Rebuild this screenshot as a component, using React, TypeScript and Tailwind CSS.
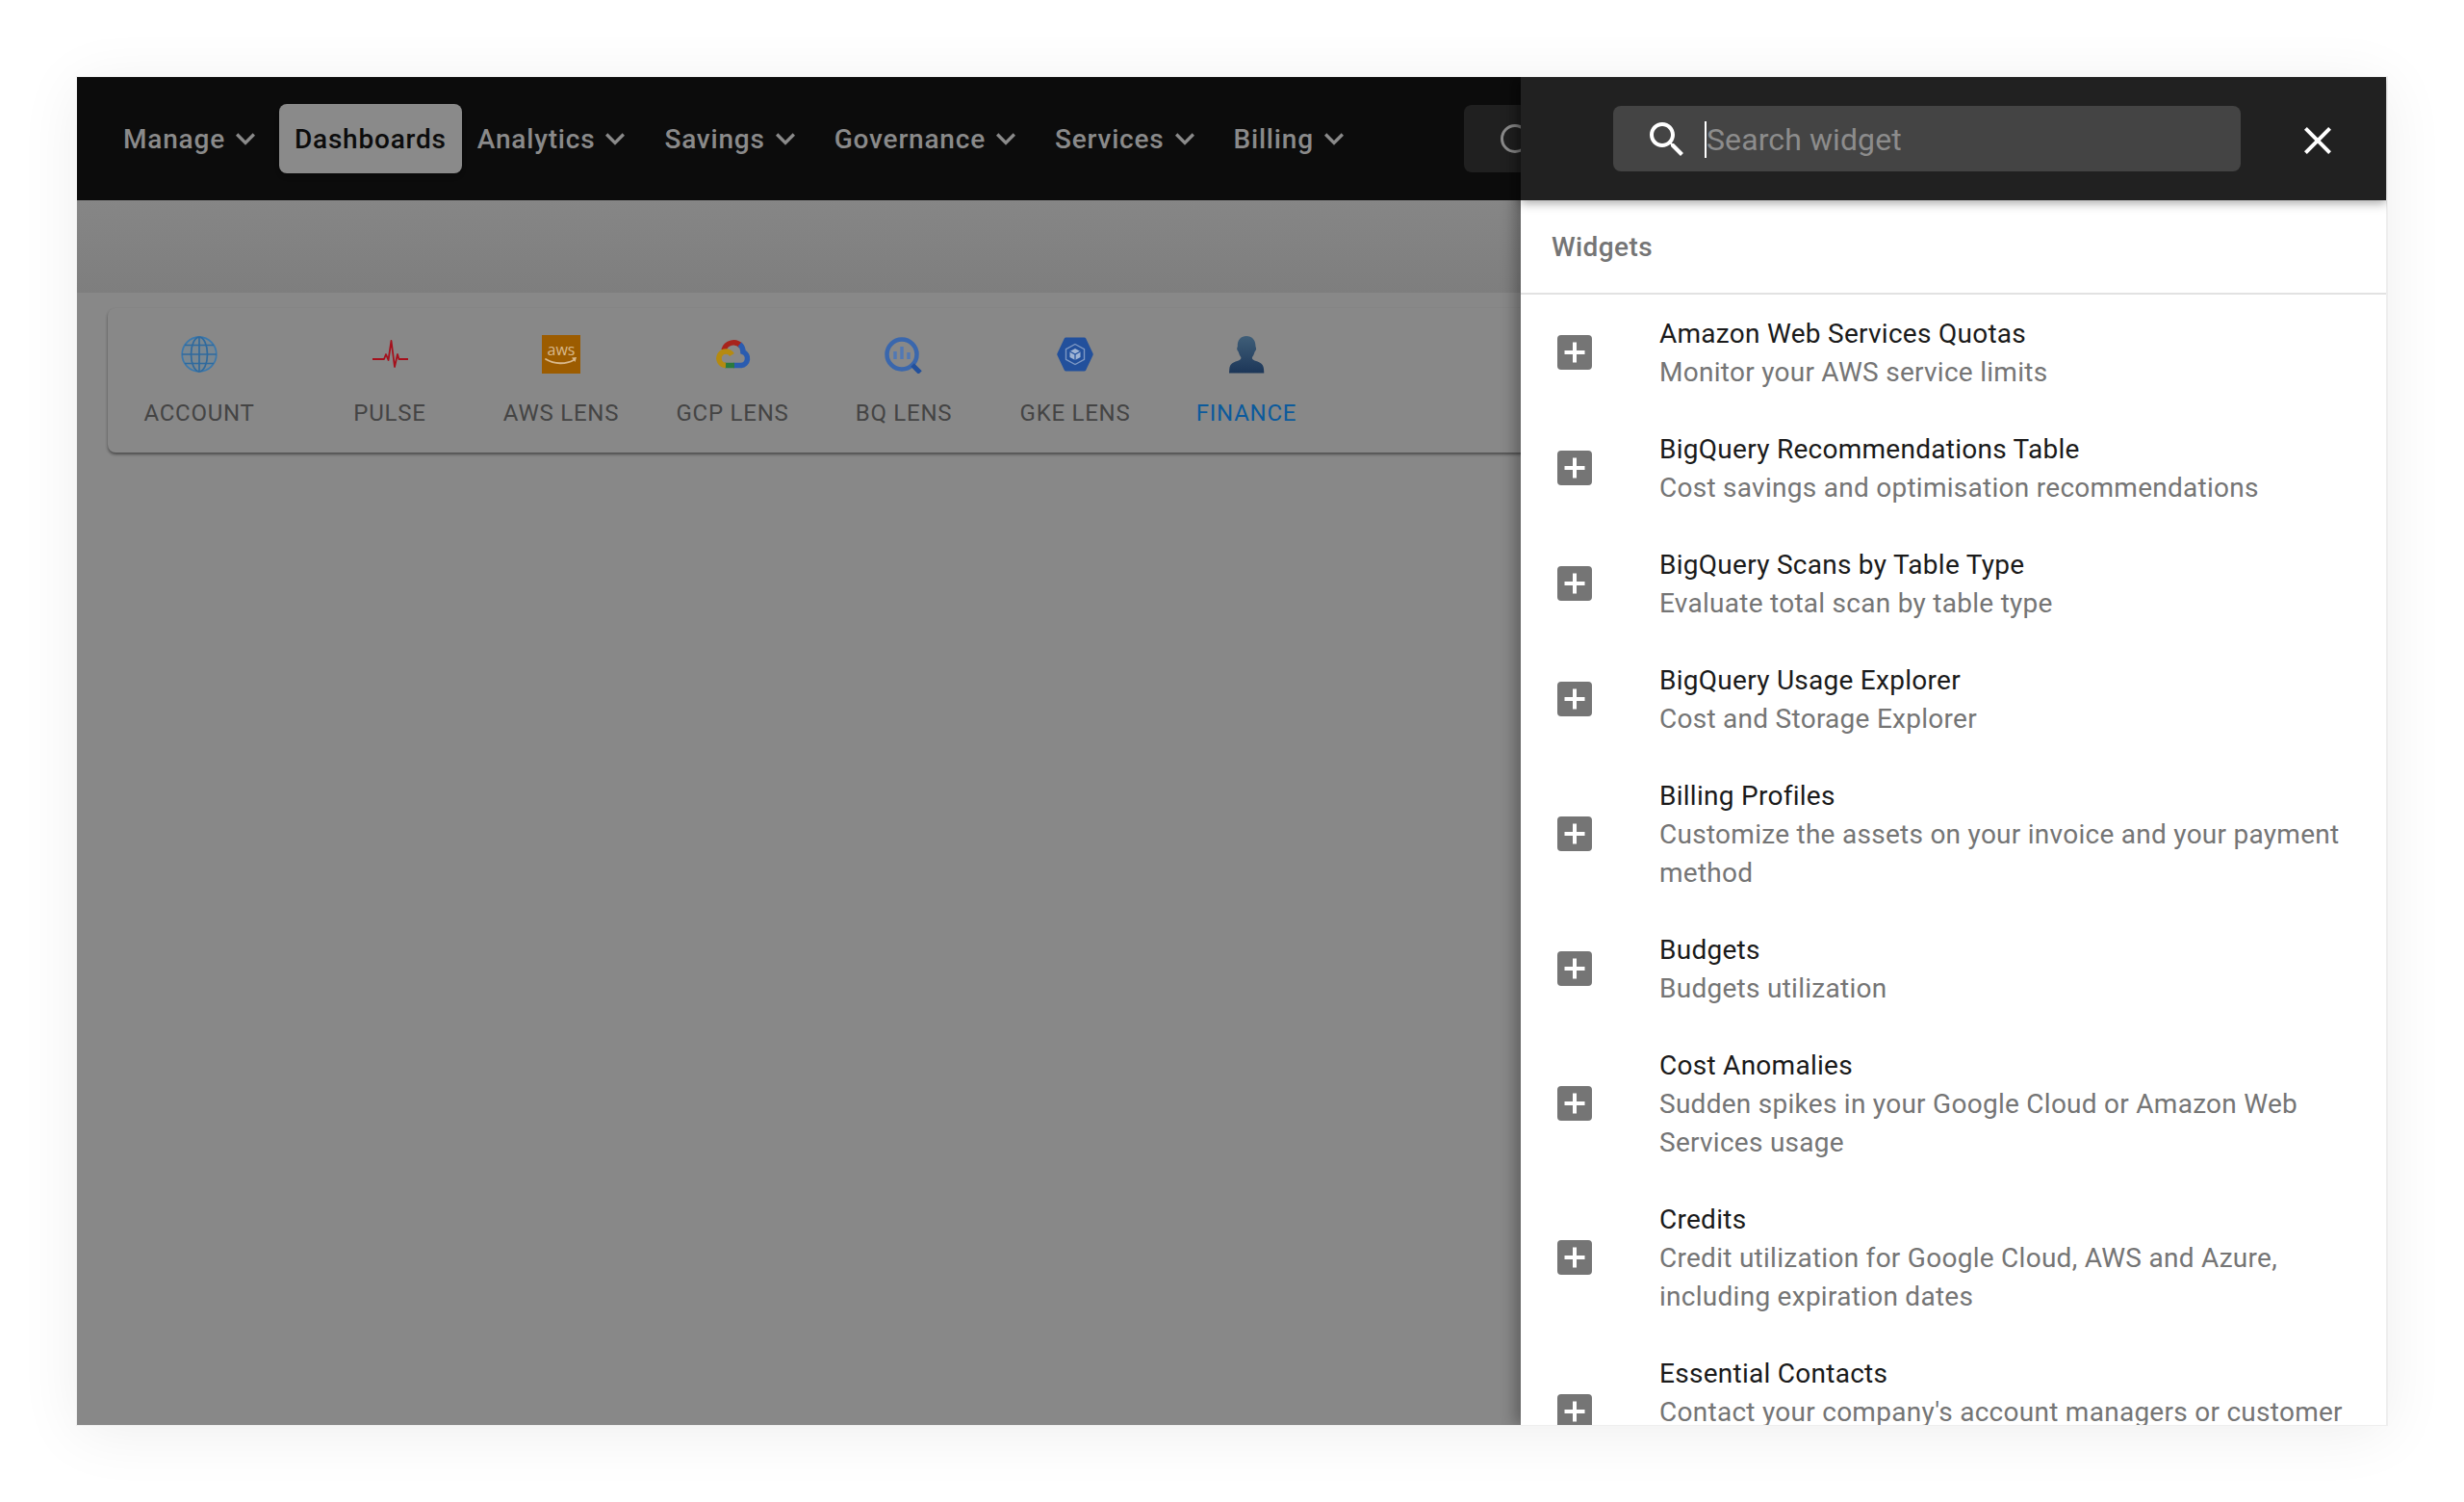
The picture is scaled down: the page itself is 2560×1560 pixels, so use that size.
import React from 'react';

const navItems = ['Manage', 'Dashboards', 'Analytics', 'Savings', 'Governance', 'Services', 'Billing'];

const widgets = [
  { title: 'Amazon Web Services Quotas', text: 'Monitor your AWS service limits' },
  { title: 'BigQuery Recommendations Table', text: 'Cost savings and optimisation recommendations' },
  { title: 'BigQuery Scans by Table Type', text: 'Evaluate total scan by table type' },
  { title: 'BigQuery Usage Explorer', text: 'Cost and Storage Explorer' },
  { title: 'Billing Profiles', text: 'Customize the assets on your invoice and your payment method' },
  { title: 'Budgets', text: 'Budgets utilization' },
  { title: 'Cost Anomalies', text: 'Sudden spikes in your Google Cloud or Amazon Web Services usage' },
  { title: 'Credits', text: 'Credit utilization for Google Cloud, AWS and Azure, including expiration dates' },
  { title: 'Essential Contacts', text: "Contact your company's account managers or customer success team" },
];

function Chevron() {
  return (
    <svg viewBox="0 0 24 24" className="ml-[1px] h-10 w-10 shrink-0" fill="#8a8a8a" aria-hidden>
      <path d="M16.59 8.59L12 13.17 7.41 8.59 6 10l6 6 6-6z" />
    </svg>
  );
}

function AddBox() {
  return (
    <svg viewBox="0 0 36 36" className="h-9 w-9 shrink-0" aria-hidden>
      <rect width="36" height="36" rx="4" fill="#757575" />
      <path d="M16 7.500h4V16h8.500v4H20v8.500h-4V20H7.500v-4H16z" fill="#fff" />
    </svg>
  );
}

function GlobeIcon() {
  return (
    <svg viewBox="0 0 40 40" className="h-10 w-10" fill="none" stroke="#2f6a9e" strokeWidth="1.7" aria-hidden>
      <circle cx="20" cy="20" r="17.8" stroke="#3a78ad" fill="#4f86b0" fillOpacity="0.25" />
      <ellipse cx="20" cy="20" rx="8.5" ry="17.8" />
      <path d="M20 2v36M2.2 20h35.6M5 10.5h30M5 29.5h30" />
    </svg>
  );
}

function PulseIcon() {
  return (
    <svg viewBox="0 0 40 40" className="h-10 w-10" fill="none" stroke="#a5101c" strokeWidth="1.8" strokeLinejoin="round" aria-hidden>
      <path d="M2 25h12l2-5 2.500 6 3-20 3.500 27 3-13 1.500 5H39" />
    </svg>
  );
}

function AwsIcon() {
  return (
    <svg viewBox="0 0 40 40" className="h-10 w-10" aria-hidden>
      <rect width="40" height="40" fill="#9c5c00" />
      <text x="20" y="21" textAnchor="middle" fontFamily="'Open Sans', sans-serif" fontSize="16" fill="#d9b98c">aws</text>
      <path d="M4 25c9 5.500 21 5.500 29 1" fill="none" stroke="#d9b98c" strokeWidth="1.800" strokeLinecap="round" />
      <path d="M31 23.500l5-.5-1.500 5z" fill="#d9b98c" />
    </svg>
  );
}

function GcpIcon() {
  return (
    <svg viewBox="0 0 40 40" className="h-10 w-10" fill="none" strokeWidth="5.500" aria-hidden>
      <path d="M11 15.500A10.500 10.500 0 0 1 29 11.500" stroke="#a8231c" />
      <path d="M27.500 9.500A10.500 10.500 0 0 1 31 17.500A7.300 7.300 0 0 1 29 31.500H21" stroke="#2a5cb0" />
      <path d="M22 31.500H12" stroke="#2a7a3e" />
      <path d="M13 31.500A7.300 7.300 0 1 1 19.500 20.500" stroke="#b58a10" />
    </svg>
  );
}

function BqIcon() {
  return (
    <svg viewBox="0 0 40 40" className="h-10 w-10" fill="none" aria-hidden>
      <circle cx="18" cy="20" r="15.500" stroke="#3a67ad" strokeWidth="4.500" />
      <path d="M29 31l8 8" stroke="#22509c" strokeWidth="5" />
      <path d="M11 17v8M18 12v13M25 18v7" stroke="#5278b4" strokeWidth="3.500" />
    </svg>
  );
}

function GkeIcon() {
  return (
    <svg viewBox="0 0 40 40" className="h-10 w-10" fill="none" aria-hidden>
      <path d="M10.500 2.500h19a2 2 0 0 1 1.700 1L38.500 19a2 2 0 0 1 0 2l-7.300 15.500a2 2 0 0 1-1.700 1h-19a2 2 0 0 1-1.700-1L1.500 21a2 2 0 0 1 0-2L8.800 3.500a2 2 0 0 1 1.700-1z" fill="#22509c" />
      <path d="M20 9.500l9.500 5.200v10.600L20 30.500l-9.500-5.200V14.700z" stroke="#7d98c4" strokeWidth="1.400" />
      <path d="M20 14l5.500 3v6L20 26l-5.500-3v-6z" fill="#9fb4d4" />
      <path d="M20 20v6M14.500 17l5.500 3 5.500-3" stroke="#22509c" strokeWidth="1.200" />
    </svg>
  );
}

function PersonIcon() {
  return (
    <svg viewBox="0 0 40 40" className="h-10 w-10" aria-hidden>
      <defs>
        <linearGradient id="person" x1="0" y1="0" x2="0" y2="1">
          <stop offset="0" stopColor="#3f5e78" />
          <stop offset="1" stopColor="#1c3658" />
        </linearGradient>
      </defs>
      <path
        d="M20 1c5.500 0 9.500 4 9.500 10.500 0 1 .7 1.300.6 3-.2 1.700-1 2-1.500 3-.7 2-1.300 4-2.600 5.500-.5 1.500.5 2.800 2.500 3.500 4 1.200 9 2.500 9.500 8.500l.3 4.500H2l.3-4.500c.5-6 5.500-7.300 9.500-8.500 2-.7 3-2 2.500-3.500-1.300-1.500-1.900-3.500-2.600-5.500-.5-1-1.300-1.300-1.500-3-.1-1.700.6-2 .6-3C10.500 5 14.500 1 20 1z"
        fill="url(#person)"
      />
    </svg>
  );
}

const tabs = [
  { label: 'ACCOUNT', icon: <GlobeIcon />, width: 'w-[190px]' },
  { label: 'PULSE', icon: <PulseIcon />, width: 'ml-[14px] w-[178px]' },
  { label: 'AWS LENS', icon: <AwsIcon />, width: 'w-[178px]' },
  { label: 'GCP LENS', icon: <GcpIcon />, width: 'w-[178px]' },
  { label: 'BQ LENS', icon: <BqIcon />, width: 'w-[178px]' },
  { label: 'GKE LENS', icon: <GkeIcon />, width: 'w-[178px]' },
  { label: 'FINANCE', icon: <PersonIcon />, width: 'w-[178px]', active: true },
];

function TopNav() {
  return (
    <header className="relative flex h-32 items-center bg-[#0c0c0c] pl-8">
      {navItems.map((item) =>
        item === 'Dashboards' ? (
          <div
            key={item}
            className="flex h-[72px] items-center rounded-lg bg-[#8a8a8a] px-4 text-[28px] font-medium tracking-[0.8px] text-[#0c0c0c] shadow-md"
          >
            <span className="translate-y-px">{item}</span>
          </div>
        ) : (
          <div key={item} className="flex h-[72px] items-center pl-4 pr-[15px] text-[28px] font-medium tracking-[0.8px] text-[#8a8a8a]">
            <span className="translate-y-px">{item}</span>
            <Chevron />
          </div>
        )
      )}
      <div className="ml-[100px] flex h-[70px] w-[100px] items-center rounded-lg bg-[#202020] pl-[38px]">
        <div className="h-[30px] w-[30px] shrink-0 rounded-full border-[3px] border-[#8a8a8a]" />
      </div>
    </header>
  );
}

function WidgetPanel() {
  return (
    <aside className="absolute inset-y-0 right-0 flex w-[900px] flex-col border-r border-[#eeeeee] bg-white shadow-[-6px_0_14px_rgba(0,0,0,0.3)]">
      <div className="flex h-32 shrink-0 items-center bg-[#212121] pl-24 shadow-[0_3px_10px_rgba(0,0,0,0.35)]">
        <div className="flex h-[68px] w-[652px] items-center rounded-lg bg-[#444444] pl-8">
          <svg viewBox="0 0 24 24" className="h-12 w-12 shrink-0 translate-y-px" fill="#ffffff" aria-hidden>
            <path d="M15.500 14h-.79l-.28-.27C15.410 12.590 16 11.110 16 9.500 16 5.910 13.090 3 9.500 3S3 5.910 3 9.500 5.910 16 9.500 16c1.610 0 3.090-.59 4.230-1.570l.27.28v.79l5 4.990L20.490 19l-4.990-5zm-6 0C7.010 14 5 11.990 5 9.500S7.010 5 9.500 5 14 7.010 14 9.500 11.990 14 9.500 14z" />
          </svg>
          <span className="ml-[15px] translate-y-px border-l-2 border-white text-[32px] leading-[38px] tracking-[0.1px] text-[#8c8c8c]">Search widget</span>
        </div>
        <svg viewBox="0 0 24 24" className="ml-14 h-12 w-12 shrink-0 translate-y-0.5" fill="#ffffff" aria-hidden>
          <path d="M19 6.410L17.590 5 12 10.590 6.410 5 5 6.410 10.590 12 5 17.590 6.410 19 12 13.410 17.590 19 19 17.590 13.410 12z" />
        </svg>
      </div>
      <div className="flex h-[98px] shrink-0 items-center border-b-2 border-[#e2e2e2] pl-8 text-[28px] font-medium tracking-[0.4px] text-[#757575]">
        <span className="translate-y-px">Widgets</span>
      </div>
      <ul className="min-h-0 flex-1 overflow-hidden">
        {widgets.map((w) => (
          <li key={w.title} className="flex items-center py-5 pl-[38px] pr-8">
            <AddBox />
            <div className="ml-[70px] min-w-0 flex-1 translate-y-px text-[28px] leading-10 tracking-[0.27px]">
              <p className="text-[#1a1a1a]">{w.title}</p>
              <p className="text-[#757575]">{w.text}</p>
            </div>
          </li>
        ))}
      </ul>
    </aside>
  );
}

export default function App() {
  return (
    <div className="h-[1560px] w-[2560px] bg-white p-20 font-['Roboto',sans-serif]">
      <div className="relative h-full w-full overflow-hidden bg-[#888888] shadow-[0_8px_60px_rgba(0,0,0,0.07)] outline outline-1 outline-[#eeeeee]">
        <TopNav />
        <div className="h-24 bg-linear-to-b from-[#868686] to-[#7e7e7e]" />
        <div className="px-8 pt-4">
          <div className="flex h-[150px] items-start rounded-lg bg-[#888888] pt-7 shadow-[0_2px_3px_rgba(0,0,0,0.45)]">
            {tabs.map((t) => (
              <div key={t.label} className={`flex shrink-0 flex-col items-center ${t.width}`}>
                {t.icon}
                <span className={`mt-[27px] text-2xl leading-7 tracking-[0.75px] ${t.active ? 'text-[#0b5a9c]' : 'text-[#444444]'}`}>
                  {t.label}
                </span>
              </div>
            ))}
          </div>
        </div>
        <WidgetPanel />
      </div>
    </div>
  );
}
